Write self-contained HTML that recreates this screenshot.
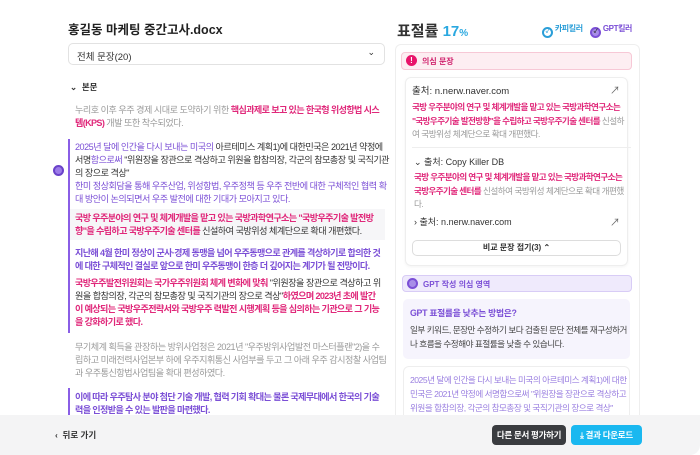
<!DOCTYPE html>
<html><head><meta charset="utf-8"><style>
*{box-sizing:border-box;margin:0;padding:0}
body{width:700px;height:455px;overflow:hidden;background:#fff;font-family:"Liberation Sans","Noto Sans CJK KR",sans-serif;color:#333;position:relative;font-size:10px}
.abs{position:absolute;white-space:nowrap}
.p{line-height:12.9px;font-size:9.1px;letter-spacing:-0.5px}
.r{line-height:13.7px;font-size:8.6px;letter-spacing:-0.5px}
.pu{color:#7b4fd6}.pk{color:#e0287a;font-weight:bold;letter-spacing:-0.65px}.g{color:#9a9a9a}.d{color:#333}
.pub{color:#7b4fd6;font-weight:bold;letter-spacing:-0.65px}
</style></head><body>
<div class="abs" style="left:68px;top:19px;font-size:12.5px;font-weight:bold;color:#222">홍길동 마케팅 중간고사.docx</div>
<div class="abs" style="left:68px;top:43px;width:317px;height:22px;border:1px solid #e2e2e2;border-radius:5px;padding:5px 8px;font-size:9.5px;color:#333">전체 문장(20)<span style="position:absolute;right:9px;top:3px;font-size:9px">⌄</span></div>
<div class="abs" style="left:70px;top:81px;font-size:8.5px;font-weight:bold;color:#333">⌄&nbsp; 본문</div>
<div class="abs p g" style="left:75px;top:104px">누리호 이후 우주 경제 시대로 도약하기 위한 <span class="pk">핵심과제로 보고 있는 한국형 위성항법 시스</span><br><span class="pk">템(KPS)</span> 개발 또한 착수되었다.</div>
<div class="abs" style="left:68px;top:139px;width:2px;height:194px;background:#8a5ee6"></div>
<div class="abs" style="left:53px;top:165px;width:11px;height:11px;border-radius:50%;background:#9c7be8;border:2px solid #6a42c9"></div>
<div class="abs p" style="left:75px;top:141px"><span class="pu">2025년 달에 인간을 다시 보내는 미국의</span> 아르테미스 계획1)에 대한민국은 2021년 약정에<br>서명<span class="pu">함으로써</span> "위원장을 장관으로 격상하고 위원을 합참의장, 각군의 참모총장 및 국직기관<br>의 장으로 격상"<br><span class="pu">한미 정상회담을 통해 우주산업, 위성항법, 우주정책 등 우주 전반에 대한 구체적인 협력 확</span><br><span class="pu">대 방안이 논의되면서 우주 발전에 대한 기대가 모아지고 있다.</span></div>
<div class="abs" style="left:70px;top:209px;width:315px;height:31px;background:#f6f6f8"></div>
<div class="abs p" style="left:75px;top:212px"><span class="pk">국방 우주분야의 연구 및 체계개발을 맡고 있는 국방과학연구소는 "국방우주기술 발전방</span><br><span class="pk">향"을 수립하고 국방우주기술 센터를</span> 신설하여 국방위성 체계단으로 확대 개편했다.</div>
<div class="abs p pub" style="left:75px;top:247px">지난해 4월 한미 정상이 군사·경제 동맹을 넘어 우주동맹으로 관계를 격상하기로 합의한 것<br>에 대한 구체적인 결실로 앞으로 한미 우주동맹이 한층 더 깊어지는 계기가 될 전망이다.</div>
<div class="abs p" style="left:75px;top:277px"><span class="pk">국방우주발전위원회는 국가우주위원회 체계 변화에 맞춰</span> "위원장을 장관으로 격상하고 위<br>원을 합참의장, 각군의 참모총장 및 국직기관의 장으로 격상"<span class="pk">하였으며 2023년 초에 발간</span><br><span class="pk">이 예상되는 국방우주전략서와 국방우주 력발전 시행계획 등을 심의하는 기관으로 그 기능</span><br><span class="pk">을 강화하기로 했다.</span></div>
<div class="abs p g" style="left:75px;top:341px">무기체계 획득을 관장하는 방위사업청은 2021년 "우주방위사업발전 마스터플랜"2)을 수<br>립하고 미래전력사업본부 하에 우주지휘통신 사업부를 두고 그 아래 우주 감시정찰 사업팀<br>과 우주통신항법사업팀을 확대 편성하였다.</div>
<div class="abs" style="left:68px;top:388px;width:2px;height:30px;background:#8a5ee6"></div>
<div class="abs p pub" style="left:75px;top:391px">이에 따라 우주탐사 분야 첨단 기술 개발, 협력 기회 확대는 물론 국제무대에서 한국의 기술<br>력을 인정받을 수 있는 발판을 마련했다.</div>

<div class="abs" style="left:397px;top:20px;font-size:15px;font-weight:bold;color:#333">표절률 <span style="color:#2aa8e0">17<span style="font-size:10px">%</span></span></div>
<div class="abs" style="left:542px;top:23px;font-size:8px;font-weight:bold;color:#2a9ed8;letter-spacing:-0.4px"><span style="display:inline-block;width:11px;height:11px;border-radius:50%;border:2px solid #2a9ed8;vertical-align:-2px;font-size:6px;text-align:center;line-height:7px">✓</span> 카피킬러</div>
<div class="abs" style="left:590px;top:23px;font-size:8px;font-weight:bold;color:#7b4fd6;letter-spacing:-0.4px"><span style="display:inline-block;width:11px;height:11px;border-radius:50%;border:2px solid #7b4fd6;background:#a88de8;vertical-align:-2px;font-size:6px;text-align:center;line-height:7px;color:#222">✓</span> GPT킬러</div>
<div class="abs" style="left:395px;top:44px;width:245px;height:380px;border:1px solid #eee;border-radius:6px"></div>
<div class="abs" style="left:401px;top:52px;width:231px;height:18px;background:#fdeef2;border:1px solid #f7c8d6;border-radius:4px;font-size:8px;font-weight:bold;color:#d0246e;padding:3px 0 0 20px">의심 문장<span style="position:absolute;left:4px;top:2px;width:11px;height:11px;border-radius:50%;background:#e8146a;color:#fff;font-size:8px;text-align:center;line-height:11px">!</span></div>
<div class="abs" style="left:405px;top:77px;width:223px;height:189px;border:1px solid #eee;border-radius:6px;box-shadow:0 1px 3px rgba(0,0,0,.05)"></div>
<div class="abs" style="left:412px;top:83px;font-size:9.5px;color:#333">출처: n.nerw.naver.com</div>
<div class="abs" style="left:610px;top:82px;font-size:10px;color:#666">↗</div>
<div class="abs r" style="left:412px;top:101px"><span class="pk">국방 우주분야의 연구 및 체계개발을 맡고 있는 국방과학연구소는</span><br><span class="pk">"국방우주기술 발전방향"을 수립하고 국방우주기술 센터를</span> <span class="g">신설하</span><br><span class="g">여 국방위성 체계단으로 확대 개편했다.</span></div>
<div class="abs" style="left:412px;top:147px;width:219px;height:1px;background:#eee"></div>
<div class="abs" style="left:414px;top:155px;font-size:9px;color:#333">⌄ 출처: Copy Killer DB</div>
<div class="abs r" style="left:414px;top:171px"><span class="pk">국방 우주분야의 연구 및 체계개발을 맡고 있는 국방과학연구소는</span><br><span class="pk">국방우주기술 센터를</span> <span class="g">신설하여 국방위성 체계단으로 확대 개편했</span><br><span class="g">다.</span></div>
<div class="abs" style="left:414px;top:215px;font-size:9px;color:#333">› 출처: n.nerw.naver.com</div>
<div class="abs" style="left:610px;top:214px;font-size:10px;color:#666">↗</div>
<div class="abs" style="left:412px;top:240px;width:209px;height:16px;border:1px solid #ddd;border-radius:5px;text-align:center;font-size:8px;font-weight:bold;line-height:14px;color:#333">비교 문장 접기(3) ⌃</div>
<div class="abs" style="left:402px;top:275px;width:230px;height:17px;background:#efeafc;border:1px solid #d8ccf6;border-radius:4px;font-size:8px;font-weight:bold;color:#7b4fd6;padding:3px 0 0 20px">GPT 작성 의심 영역<span style="position:absolute;left:4px;top:2px;width:11px;height:11px;border-radius:50%;background:#a88de8;border:2px solid #7b4fd6"></span></div>
<div class="abs" style="left:403px;top:299px;width:227px;height:60px;background:#f6f4fd;border-radius:5px"></div>
<div class="abs" style="left:410px;top:306px;font-size:8.8px;font-weight:bold;color:#7b4fd6;letter-spacing:-0.3px">GPT 표절률을 낮추는 방법은?</div>
<div class="abs r" style="left:410px;top:323px;line-height:14px;color:#444">일부 키워드, 문장만 수정하기 보다 검출된 문단 전체를 재구성하거<br>나 흐름을 수정해야 표절률을 낮출 수 있습니다.</div>
<div class="abs" style="left:403px;top:366px;width:227px;height:60px;border:1px solid #eee;border-radius:6px"></div>
<div class="abs r" style="left:410px;top:373px;line-height:14px;color:#9a7fe0">2025년 달에 인간을 다시 보내는 미국의 아르테미스 계획1)에 대한<br>민국은 2021년 약정에 서명함으로써 "위원장을 장관으로 격상하고<br>위원을 합참의장, 각군의 참모총장 및 국직기관의 장으로 격상"</div>

<div class="abs" style="left:0;top:415px;width:700px;height:40px;background:#f4f4f5;border-bottom-right-radius:10px"></div>
<div class="abs" style="left:55px;top:429px;font-size:8.5px;color:#333;font-weight:bold">‹&nbsp;&nbsp;뒤로 가기</div>
<div class="abs" style="left:492px;top:425px;width:74px;height:20px;background:#3a3c40;border-radius:4px;color:#fff;font-size:8.5px;font-weight:bold;text-align:center;line-height:20px;letter-spacing:-0.3px">다른 문서 평가하기</div>
<div class="abs" style="left:571px;top:425px;width:71px;height:20px;background:#1ab8f0;border-radius:4px;color:#fff;font-size:8.5px;font-weight:bold;text-align:center;line-height:20px;letter-spacing:-0.3px">⤓ 결과 다운로드</div>
</body></html>
